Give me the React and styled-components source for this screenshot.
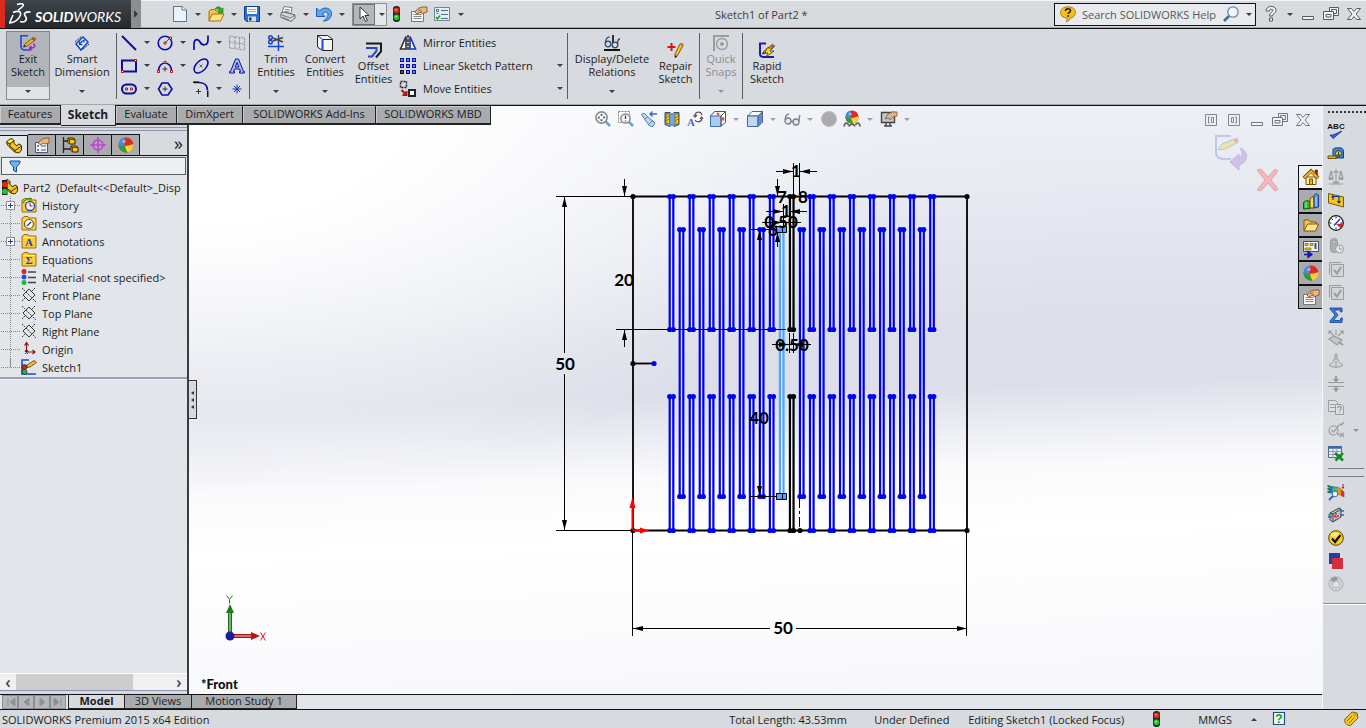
import React from 'react';
import styled, { createGlobalStyle, css } from 'styled-components';

const GlobalStyle = createGlobalStyle`
  * {
    box-sizing: border-box;
  }
  body {
    background: #d7dadf;
    color: #1c1c1c;
    font-family: 'Open Sans', 'Noto Sans', sans-serif;
    font-size: 11px;
    line-height: 13px;
    margin: 0;
  }
  button, input {
    background: none;
    border: 0;
    color: inherit;
    font: inherit;
    margin: 0;
    padding: 0;
  }
  ul {
    list-style: none;
    margin: 0;
    padding: 0;
  }
  svg {
    display: block;
  }
`;

const navy = '#0c0ca8';
const gray = '#9a9ca0';

const folder = (
  <>
    <path d="M1 3h1l1-1.500h4l1 1.500h7v12H1z" fill="#f8cf3c" stroke="#a36c08" />
    <path d="M2.500 4.500h11" stroke="#fff0a0" />
  </>
);

const plane = (
  <g fill="none" stroke="#333">
    <path d="M8 2l6 6-6 6-6-6z" />
    <path d="M5 5l6 6M1 1l3 3M12 12l3 3M14 1l-3 3M1 14l3-3" strokeDasharray="2 1" />
  </g>
);

const pencil = (
  <>
    <path d="M4.500 9.500L12 3.500l2.500 2L7 11l-3.500 1z" fill="#f6b93b" stroke="#5b3a08" strokeWidth=".8" />
    <path d="M12 3.500l1.500-1.200 2.300 1.600-1.300 1.600z" fill="#e06a6a" stroke="#5b1010" strokeWidth=".6" />
    <path d="M3.500 12l1-2.300 1.500 1.600z" fill="#222" />
  </>
);

const part = (
  <>
    <path d="M.5 4L3 1.500l3-1 2 2v3l3 2.500 1.500-2 2 .5 1 2v3.500L13 15l-4.500-1-7-7z" fill="#f2c81c" stroke="#3d2c00" />
    <path d="M1 4.500l3 1.500 4-3.500M4 6v2.500l5 4 3-2 3.500-2.500M9 12.500v1.500" fill="none" stroke="#3d2c00" />
    <path d="M2 3.500l2.500-2 2 1-2.500 2zM10.500 9.500l2-2" fill="#ffeb80" stroke="none" />
  </>
);

const lights = (
  <>
    <rect x="5" y="0" width="7" height="16" rx="3" fill="#2b2b2b" />
    <circle cx="8.500" cy="4.500" r="2.800" fill="#e8261c" />
    <circle cx="8.500" cy="11.300" r="2.800" fill="#21c42a" />
    <circle cx="8" cy="3.700" r=".9" fill="#ff9a90" />
    <circle cx="8" cy="10.500" r=".9" fill="#a4f7a0" />
  </>
);

const sphere = (
  <>
    <circle cx="8" cy="8" r="7.500" fill="#e02a1f" />
    <path d="M.5 8A7.500 7.500 0 0 1 8 .5c-2 2-2.500 5.500-1 8.500-2 .5-4.500.3-6.500-1z" fill="#3f8be8" />
    <path d="M.5 8c2 1.300 4.500 1.500 6.500 1 .8 2 1.500 4.500 2.500 6.300A7.500 7.500 0 0 1 .5 8z" fill="#27a336" />
    <path d="M7 9c3-.3 6-1 8.500-2 .3 4-2 7.500-6 8.300C8.300 13.500 7.500 11 7 9z" fill="#f7d33c" />
    <circle cx="6" cy="4.500" r="1.800" fill="#fff" opacity=".45" />
  </>
);

const checks = (
  <g fill="#d2d4d7" stroke={gray}>
    <path d="M1.500 13.500v-12h12" />
    <path d="M3.500 3.500h12v12h-12z" />
    <path d="M6 9l3 3.500L13 6" fill="none" strokeWidth="2" />
  </g>
);

const hand = (
  <>
    <path d="M.5 5.500h12v10H.5z" fill="#f6f6f6" stroke="#777" />
    <path d="M2.500 8.500h8M2.500 10.500h8M2.500 12.500h8" stroke="#888" />
    <path d="M4 6l3-3.500L11 1h5v5l-4 1.500-3-1L6 8z" fill="#e9b880" stroke="#7b4a1a" strokeWidth=".8" />
    <path d="M7 5l3-1.500M9 6.500l2-1.500" stroke="#7b4a1a" strokeWidth=".8" />
  </>
);

const restore = (
  <g fill="none" stroke="#555960">
    <path d="M6.500 1.500h9v8h-9zM8.500 3.500h5v4h-5z" fill="#f4f5f7" />
    <path d="M.5 5.500h10v8H.5zM3 8.500h5v2.500H3z" fill="#f4f5f7" />
  </g>
);

const cross = (
  <path
    d="M1.500 2.500h4L8 5.500l2.500-3h4L10 8l4.500 5.500h-4L8 10.500l-2.500 3h-4L6 8z"
    fill="#f4f5f7"
    stroke="#555960"
  />
);

const icons = {
  file: (
    <>
      <path d="M1.500.5H10L14.500 4v11.500h-13z" fill="#eaf3fa" stroke="#5b7487" />
      <path d="M10 .5V4h4.500" fill="#fff" stroke="#5b7487" />
    </>
  ),
  open: (
    <>
      <path d="M1 15V5h1l1-1.500h4L8 5h4v2" fill="#f2c64a" stroke="#a5730d" />
      <path d="M1 15L4 8h12l-3.500 7z" fill="#ffe187" stroke="#a5730d" />
      <path d="M7 3c2-3 5-3 6.500 0L15 2v5H10l1.500-2C10.500 3 9 2.500 7 3z" fill="#35ab35" stroke="#187018" strokeWidth=".6" />
    </>
  ),
  save: (
    <>
      <path d="M.5.500h15v15h-13l-2-2z" fill="#2d70d0" stroke="#123c86" />
      <path d="M3 1h10v7H3z" fill="#f6f8fb" />
      <path d="M4 3.500h8M4 5.500h8" stroke="#9ab" />
      <path d="M4 10.500h8v5H4z" fill="#d9dee6" />
      <path d="M5 11.500h2.500v3H5z" fill="#234" />
    </>
  ),
  print: (
    <>
      <path d="M2 7l2-6.500 8 1-1 6z" fill="#fff" stroke="#777" />
      <path d="M5 3.500l5 .6M4.500 5.500l5 .6" stroke="#67a" />
      <path d="M1 7l3-1 11 3v3l-4 3.500L1 11.500z" fill="#d5d7da" stroke="#666" />
      <path d="M1.500 9l9 3 4.500-3M3 11.500l6 2.500" fill="none" stroke="#777" />
    </>
  ),
  undo: (
    <path d="M.5 2v8.500H9L6.500 8c2-3 5.500-2.500 5.500.5 0 2.500-1.500 4-4.500 6.500 5 0 8-3.500 8-7.500C15.500 2.500 8.500-.5 3.500 5z" fill="#5aa9ea" stroke="#1a5fb0" />
  ),
  cursor: <path d="M4 1v12l3-3 2.500 5.500 2-1L9 9.500h4z" fill="#fff" stroke="#333" />,
  lights,
  hand,
  list: (
    <>
      <path d="M.5 1.500h15v13H.5z" fill="#e4eef5" stroke="#6e8798" />
      <path d="M7 4.500h7M7 8.500h7M7 12.500h7" stroke="#4c6c80" />
      <path d="M2.500 3.500h2v2h-2zM2.500 7.500h2" fill="none" stroke="#4c6c80" />
      <path d="M2 11l1.500 2L6 9.500" fill="none" stroke="#1ea02a" strokeWidth="1.600" />
    </>
  ),
  helpBubble: (
    <>
      <path d="M8 .8c5 0 7.500 2.500 7.500 5.500S13 12 10 12.300c0 1.700-1.500 3-4 3 1-1 1.300-2 1-3.200C2.500 11.700.5 9.500.5 6.500S3 .8 8 .8z" fill="#f5bf1c" stroke="#9c6a00" strokeWidth=".8" />
      <path d="M5.500 5c0-3 5-3 5-.3 0 1.800-2.300 1.500-2.300 3.300" fill="none" stroke="#222" strokeWidth="1.600" />
      <circle cx="8.200" cy="10" r="1" fill="#222" />
    </>
  ),
  search: (
    <>
      <path d="M1 15l5-5" stroke="#47708e" strokeWidth="2.600" />
      <circle cx="10" cy="6" r="5.200" fill="#ecf6fc" stroke="#6a8ea8" strokeWidth="1.300" />
      <path d="M7 6c0-2 1.500-3 3-3" fill="none" stroke="#fff" />
    </>
  ),
  question: (
    <g stroke="#555960" fill="#f4f5f7">
      <path d="M3 5c0-6 10-6 10-.5 0 3-3.500 3-3.500 5.500h-3c0-3.500 3.500-4 3.500-5.500S6.500 2.500 6.200 5z" />
      <path d="M6.500 12h3v3h-3z" />
    </g>
  ),
  minimize: <path d="M2.500 10.500h11v3h-11z" fill="#f4f5f7" stroke="#555960" />,
  restore,
  cross,
  paneLeft: (
    <g fill="none" stroke="#686c74">
      <path d="M2.500 2.500h11v11h-11zM10.500 5.500v5h-2v-5zM7 5H5.500v6H7" fill="#f0f1f4" />
    </g>
  ),
  paneRight: (
    <g fill="none" stroke="#686c74">
      <path d="M2.500 2.500h11v11h-11zM5.500 5.500v5h2v-5zM9 5h1.500v6H9" fill="#f0f1f4" />
    </g>
  ),
  exitSketch: (
    <>
      <path d="M8 .8H1V11c0 2.500 1.500 4 4 4h5" fill="none" stroke="#1d46e0" strokeWidth="1.600" />
      {pencil}
      <path d="M13 9c3 1 2 4-1 4h-2M11.500 11l-2 2 2 2.500" fill="none" stroke="#b010b8" strokeWidth="1.300" />
    </>
  ),
  smartDim: (
    <g fill="none" stroke="#1846c8">
      <path d="M2 9l7-7 5 5-7 8z" fill="#e6effc" strokeWidth="1.500" />
      <path d="M1 7l7-6M15 9l-7 6" stroke="#222" strokeDasharray="2 1" />
      <path d="M5 9l5-4M5.500 6.500v3h3M10 4.500v3" strokeWidth="1.300" />
    </g>
  ),
  line: <path d="M1 1l14 14" stroke={navy} strokeWidth="2" />,
  rect: (
    <>
      <path d="M1 2.500h14v11H1z" fill="none" stroke={navy} strokeWidth="2" />
      <path d="M13.500 1.500h2v2h-2zM.5 12.500h2v2h-2z" fill="#fff" stroke="#b01010" />
    </>
  ),
  slot: (
    <>
      <rect x="1" y="3.500" width="14" height="9" rx="4.500" fill="none" stroke={navy} strokeWidth="2" />
      <path d="M4.500 7h2v2h-2zM9.500 7h2v2h-2z" fill="#fff" stroke="#b01010" />
    </>
  ),
  circle: (
    <>
      <circle cx="8" cy="8" r="6.800" fill="none" stroke={navy} strokeWidth="1.600" />
      <path d="M9 7l3-3" stroke="#b01010" />
      <path d="M7 7h2v2H7zM12.500 2h2v2h-2z" fill="#fff" stroke="#b01010" />
    </>
  ),
  arc: (
    <>
      <path d="M1.500 13A6.500 8 0 0 1 14.500 13" fill="none" stroke={navy} strokeWidth="1.600" />
      <path d="M8 8.500v5M5.500 11h5" stroke="#333" />
      <path d="M7 3.500h2v2H7zM.5 12.500h2v2h-2zM13.500 12.500h2v2h-2z" fill="#fff" stroke="#b01010" />
    </>
  ),
  polygon: (
    <>
      <path d="M5 2h6l4 6-4 6H5L1.500 8z" fill="none" stroke={navy} strokeWidth="1.600" />
      <path d="M8 5.500v5M5.500 8h5" stroke="#333" />
    </>
  ),
  spline: <path d="M1 15V9.500c0-6 4-6 6-2.500 2 4 8 4 8-2V.5" fill="none" stroke={navy} strokeWidth="1.700" />,
  ellipse: (
    <>
      <ellipse cx="8" cy="8" rx="8.500" ry="5" fill="none" stroke={navy} strokeWidth="1.600" transform="rotate(-45 8 8)" />
      <path d="M6.500 6.500l3 3M9.500 6.500l-3 3" stroke="#444" strokeWidth=".8" />
    </>
  ),
  fillet: (
    <>
      <path d="M1 1.500h5c6 0 8.500 3.500 8.500 8" fill="none" stroke={navy} strokeWidth="1.700" />
      <path d="M0 .500h6v1.500H0zM14 10h1.500v6H14z" fill="#111" />
      <path d="M5.500 8v5M3 10.500h5" stroke="#333" />
    </>
  ),
  planeGrid: (
    <path d="M.5 1l15 2v12l-15-2zM.5 7l15 2M6 2v12M10.500 2.500v12" fill="none" stroke="#8e9095" strokeDasharray="2 1" />
  ),
  text: (
    <>
      <path d="M6.500 1h3l5 12.500h1V15h-5v-1.500h1L10.500 11h-5l-1 2.500h1V15h-5v-1.500h1z" fill="#a9bbf0" stroke={navy} />
      <path d="M6.300 9h3.500L8 4.500z" fill="#d7dadf" stroke={navy} />
    </>
  ),
  point: <path d="M8 3.500v9M3.500 8h9M5 5l6 6M11 5l-6 6" stroke="#1630c0" />,
  trim: (
    <>
      <path d="M0 11.500h16M10.500 0v16" stroke="#1846c8" strokeWidth="1.500" />
      <path d="M5 6l10-3.500M5 3l10 4" stroke="#444" strokeWidth="1.600" />
      <circle cx="2.500" cy="2.500" r="1.800" fill="none" stroke="#1846c8" strokeWidth="1.500" />
      <circle cx="2.500" cy="7" r="1.800" fill="none" stroke="#1846c8" strokeWidth="1.500" />
    </>
  ),
  convert: (
    <>
      <path d="M.5.500h10l5 3.500v11.500h-10L.5 12z" fill="#f4f5f7" stroke="#222" />
      <path d="M5.500 4.500h10M.5.500l5 4" fill="none" stroke="#222" />
      <path d="M5.500 5v10" stroke="#1846e8" strokeWidth="2" />
    </>
  ),
  offset: (
    <g fill="none">
      <path d="M0 1.500h15v8L10 15.500" stroke="#1a1a1a" strokeWidth="2" />
      <path d="M0 6h10.500v3L6 14.500H2" stroke="#2348c0" strokeWidth="2" />
    </g>
  ),
  mirror: (
    <>
      <path d="M8 0v16" stroke="#222" strokeDasharray="3 1" strokeWidth="1.500" />
      <path d="M6 1.500L.5 14H6z" fill="#fff" stroke="#333" strokeWidth="1.600" />
      <path d="M10 1.500L15.500 14H10z" fill="#fff" stroke="#1630c0" strokeWidth="1.600" />
    </>
  ),
  pattern: (
    <>
      {[0, 6, 12].map(x =>
        [0, 6, 12].map(y => (
          <rect
            key={`${x}-${y}`}
            x={x + 0.5}
            y={y + 0.5}
            width="3"
            height="3"
            fill={x === 0 && y === 12 ? '#555' : '#6f86e8'}
            stroke={x === 0 && y === 12 ? '#111' : navy}
          />
        ))
      )}
    </>
  ),
  move: (
    <>
      <path d="M.5 .5h6v6h-6z" fill="none" stroke="#222" strokeDasharray="2 1" strokeWidth="1.500" />
      <path d="M1.500 9l4 4M6.500 10v4h-4" fill="none" stroke="#b01010" strokeWidth="2" />
      <path d="M9 9h6v6H9z" fill="#fff" stroke="#222" strokeWidth="2" />
    </>
  ),
  relations: (
    <>
      <path d="M9 0v12" stroke="#222" strokeWidth="1.800" />
      <path d="M0 15h16" stroke="#111" strokeWidth="2" />
      <circle cx="4" cy="9" r="2.800" fill="#c9e2f4" stroke="#34495c" strokeWidth="1.300" />
      <circle cx="11" cy="10" r="2.800" fill="#c9e2f4" stroke="#34495c" strokeWidth="1.300" />
      <path d="M1.500 8c0-4 2-6 4-6M13.500 9c0-3 1-5 2.500-5" fill="none" stroke="#34495c" strokeWidth="1.300" />
    </>
  ),
  repair: (
    <>
      <path d="M3.500 1v8M-.5 5h8" stroke="#d01818" strokeWidth="2" />
      <path d="M12 2l3 1.500-5.500 10L7 15.500 7 12z" fill="#f7c32c" stroke="#5b3a08" strokeWidth=".8" />
      <path d="M12 2l1.200-1.500 2.600 1.300L15 3.500z" fill="#e06a6a" />
      <path d="M7 13.500v2.500l2.300-2z" fill="#111" />
    </>
  ),
  snaps: (
    <g fill="none" stroke={gray}>
      <path d="M0 1h16M1 0v16" strokeWidth="2" />
      <circle cx="9" cy="9" r="5.500" strokeWidth="1.400" />
      <circle cx="9" cy="9" r="1.500" fill={gray} />
    </g>
  ),
  rapid: (
    <>
      <path d="M7 1.500H1V12c0 2 1.500 3 4 3h10" fill="none" stroke="#1818c8" strokeWidth="2" />
      {pencil}
      <path d="M8 6h5l-2 3h4l-8 6 2-4H6z" fill="#ffd91a" stroke="#222" strokeWidth=".7" />
    </>
  ),
  part,
  root: (
    <>
      {part}
      <path d="M0 1h5.500v15H0z" fill="#222" />
      <circle cx="2.800" cy="5.500" r="2.700" fill="#e8261c" />
      <circle cx="2.800" cy="12.500" r="2.700" fill="#21c42a" />
    </>
  ),
  property: (
    <>
      <path d="M1.500 5.500h12v10h-12z" fill="#eef3fa" stroke="#556" />
      <path d="M3 8h2v2H3zM3 12h2v2H3z" fill="#6488c8" />
      <path d="M7 9h5M7 13h5" stroke="#556" />
      <path d="M4 6l3-3 4-2h4v5l-4 1-2-1-2 2z" fill="#e9b880" stroke="#7b4a1a" strokeWidth=".8" />
    </>
  ),
  config: (
    <>
      <path d="M1.500 0v16M2 4h4M2 12h7" stroke="#222" strokeWidth="1.300" />
      <path d="M6 1h5l2 1.500V7H7.500L6 5.500zM9 9h5l2 1.500V15h-5.500L9 13.500z" fill="#f2c81c" stroke="#2a1e00" />
      <path d="M6 1l1.500 1.500H13M7.500 2.500V7M9 9l1.500 1.500H16M10.500 10.500V15" fill="none" stroke="#2a1e00" strokeWidth=".7" />
    </>
  ),
  target: (
    <g fill="none" stroke="#c23fd6">
      <circle cx="8" cy="8" r="5" strokeWidth="1.500" />
      <path d="M8 0v16M0 8h16" strokeWidth="1.500" />
    </g>
  ),
  sphere,
  funnel: <path d="M3 3h10v2L9.500 9v5L6.500 12.500V9L3 5z" fill="#6db2f2" stroke="#0f4fa8" />,
  history: (
    <>
      {folder}
      <circle cx="9" cy="9" r="4.500" fill="#eef5ff" stroke="#284a9a" strokeWidth="1.300" />
      <path d="M9 6v3h2.500" fill="none" stroke="#b01010" />
      <path d="M2 6c2-4 6-5 9-4" fill="none" stroke="#1f9a2a" strokeWidth="1.500" />
    </>
  ),
  sensors: (
    <>
      {folder}
      <circle cx="8" cy="9" r="4.500" fill="#fff" stroke="#555" strokeWidth="1.200" />
      <path d="M6 11l4-4" stroke="#345" strokeWidth="1.400" />
    </>
  ),
  annotations: (
    <>
      {folder}
      <text x="8" y="13" textAnchor="middle" fontFamily="Liberation Serif, serif" fontSize="11" fontWeight="700" fill="#1c3fc0">A</text>
    </>
  ),
  equations: (
    <>
      {folder}
      <text x="8" y="13" textAnchor="middle" fontFamily="Liberation Serif, serif" fontSize="11" fontWeight="700" fill="#1c3fc0">Σ</text>
    </>
  ),
  material: (
    <>
      <circle cx="3" cy="2.500" r="2.500" fill="#e02020" />
      <circle cx="3" cy="8" r="2.500" fill="#2b49d8" />
      <circle cx="3" cy="13.500" r="2.500" fill="#25b535" />
      <path d="M7 3h8M7 8.500h8M7 13.500h8" stroke="#444" strokeWidth="1.600" />
    </>
  ),
  plane,
  origin: (
    <g stroke="#8e1414" fill="none" strokeWidth="1.200">
      <path d="M5.500 11V2M3.500 4.500l2-3 2 3M6 11h8M11.500 9l2.500 2-2.500 2" />
      <path d="M4 9.500l3 3M7 9.500l-3 3" stroke="#222" />
    </g>
  ),
  sketch: (
    <>
      <path d="M8 1H1v14h14" fill="none" stroke="#1d46e0" strokeWidth="1.600" />
      <path d="M6 6l7-4.500 2.500 2L9 8l-3 .5z" fill="#f6b93b" stroke="#5b3a08" strokeWidth=".8" />
      <circle cx="3.500" cy="8" r="2.500" fill="#d62018" stroke="#222" strokeWidth=".7" />
      <circle cx="3.500" cy="13" r="2.500" fill="#21c42a" stroke="#222" strokeWidth=".7" />
    </>
  ),
  zoomFit: (
    <>
      <path d="M10.500 10.500l4.500 4.500" stroke="#6f9fd8" strokeWidth="2.600" />
      <circle cx="6.500" cy="6.500" r="5.600" fill="#f4f6f8" stroke="#888c92" strokeWidth="1.600" />
      <path d="M6.500 2.500l1.500 2H5zM6.500 10.500l1.500-2H5zM2.500 6.500l2-1.500v3zM10.500 6.500l-2-1.500v3z" fill="#444" />
    </>
  ),
  zoomArea: (
    <>
      <path d="M.5.500h11v11H.5z" fill="none" stroke="#888" strokeDasharray="2 1" />
      <path d="M10.500 10.500l4.500 4.500" stroke="#6f9fd8" strokeWidth="2.600" />
      <circle cx="7.500" cy="7.500" r="4.600" fill="#f4f6f8" stroke="#888c92" strokeWidth="1.500" />
      <path d="M7.500 4.500V8M7.500 9.500v1" stroke="#444" strokeWidth="1.300" />
    </>
  ),
  prevView: (
    <>
      <path d="M.5 3.500L3 2l4 4 7 6-2 3.500-3.500-.5-5-7z" fill="#b9d6f3" stroke="#4f80b8" />
      <path d="M4 8l3-2.500M8 13l4-4" stroke="#4f80b8" />
      <path d="M16 3H9M11.500 .5L9 3l2.500 2.500" fill="none" stroke="#2f68c8" strokeWidth="1.400" />
    </>
  ),
  section: (
    <>
      <path d="M1 1.500h5c1 2 3 2 4 0h5v12l-5 2c-1-2-3-2-4 0l-5-2z" fill="#6fa8e8" stroke="#294f86" />
      <path d="M2 3h3.500v10L2 12zM11 3h3.500v9L11 14z" fill="#f5cc2d" stroke="#7d5d00" strokeWidth=".8" />
      <path d="M2 7l3-2M2 10l3-2M11 7l3-2M11 10l3-2" stroke="#7d5d00" strokeWidth=".8" />
    </>
  ),
  orientText: (
    <>
      <text x="0" y="15" fontFamily="Liberation Serif, serif" fontSize="11" fontWeight="700" fill="#3a6fd8">A</text>
      <path d="M8 5c0-5 6-5 7-1M15 7c0 4-5 5-7 2M6.500 4l1.500 2 2-2M16 8l-1.500-2-1.500 2" fill="none" stroke="#555" strokeWidth="1.200" />
    </>
  ),
  orientation: (
    <>
      <path d="M4.500.500h11v11L11 15" fill="#fff" stroke="#555" />
      <path d="M.5 5h10.500v10.500H.5z" fill="#a9cdf2" stroke="#3f6ea8" />
      <path d="M.5 5l4-4.500M11 5l4.500-4.500M11 5v10" stroke="#555" fill="none" />
      <path d="M8 1.500v3M6.500 3h3M13 6v4M11.500 8h3" stroke="#d02020" />
    </>
  ),
  style: (
    <>
      <path d="M.5 5l4.500-4.500h10.500L11 5z" fill="#fafcff" stroke="#4d6484" />
      <path d="M.5 5H11v10.500H.5z" fill="#bcd8f6" stroke="#4d6484" />
      <path d="M11 5l4.500-4.500V11L11 15.500z" fill="#5c8fd4" stroke="#4d6484" />
    </>
  ),
  glasses: (
    <g fill="none" stroke="#7c8086" strokeWidth="1.300">
      <circle cx="4" cy="10" r="3" fill="#dcebf6" />
      <circle cx="12" cy="11" r="3" fill="#dcebf6" />
      <path d="M7 10.500h2M1.200 9C1 5 3 3 5 3M15 10c.5-3 0-4 1-6" />
    </g>
  ),
  ball: <circle cx="8" cy="8" r="7.500" fill="#ababad" stroke="#b9babc" />,
  scene: (
    <>
      <g transform="translate(1 -1) scale(.88)">{sphere}</g>
      <path d="M0 15.500c1-5 4-4 4.500-1M5 15.500c1-3 5-3 6 0M11.500 14c1-3 4-3 4.500 1.500" fill="none" stroke="#555" strokeWidth="1.500" />
    </>
  ),
  screen: (
    <>
      <path d="M.5 1.500h13v10H.5z" fill="#c5c8cc" stroke="#444" strokeWidth="1.400" />
      <path d="M5 12v2.500M9 12v2.500M3 15h8" stroke="#444" strokeWidth="1.400" />
      <path d="M4 8l3-5 4-2h5v4l-4 1-3 3-1-2z" fill="#e3b489" stroke="#7b5535" strokeWidth=".8" />
    </>
  ),
  home: (
    <>
      <path d="M12 1h2.500v6H12z" fill="#c41f1f" stroke="#6a0a0a" strokeWidth=".6" />
      <path d="M3 8h10v7.500H3z" fill="#fff1b0" stroke="#7a5200" />
      <path d="M.8 9L8 1.800 15.200 9" fill="none" stroke="#7a5200" strokeWidth="3.400" />
      <path d="M1.300 8.700L8 2.200l6.700 6.500" fill="none" stroke="#f7bd1d" strokeWidth="1.800" />
      <path d="M6.500 10h3v5.500h-3z" fill="#f0b01a" stroke="#7a5200" />
    </>
  ),
  library: (
    <>
      <path d="M.5 9.500l3-2 3.500 1v7l-6.500.5z" fill="#2fb93a" stroke="#0c5a14" />
      <path d="M7 6l2-2.500 2 1V15H7z" fill="#f2c81c" stroke="#6a5000" />
      <path d="M11 2.500l2-2 2.500 1.500v12L11 15z" fill="#5b95ea" stroke="#1a3f86" />
      <path d="M3 9v6M9 6v8M13 4v9" stroke="#fff" opacity=".6" />
    </>
  ),
  folderOpen: (
    <>
      <path d="M1 14V3h5l1.500 2H13v3" fill="#f5c94e" stroke="#7d5606" />
      <path d="M1 14l3.500-7H15.500L12.500 14z" fill="#ffe48f" stroke="#7d5606" />
    </>
  ),
  palette: (
    <>
      <path d="M.5 .5h15v10H.5z" fill="#eef1f5" stroke="#40546c" />
      <path d="M2 2.500h3v2H2zM7 2.500h3v2H7zM2 7h6v2H2z" fill="#f2c81c" stroke="#7c6000" strokeWidth=".7" />
      <path d="M12.500 2v6" stroke="#40546c" strokeWidth="2" />
      <path d="M1 13.500h5M5 10.500l4 3-4 3z" fill="#1414c8" stroke="#1414c8" strokeWidth="1.300" />
    </>
  ),
  abc: (
    <>
      <text x="8" y="6" textAnchor="middle" fontFamily="Liberation Sans, sans-serif" fontSize="8" fontWeight="700" fill="#111">ABC</text>
      <path d="M2 12l3 3.500L14 8l-9 4z" fill="#2f6be0" stroke="#1a45a8" />
    </>
  ),
  tape: (
    <>
      <path d="M5 4c0-2 3-2.500 8-2 2 .5 2.500 2 2.500 5v5H5z" fill="#3c8ad8" stroke="#123a78" />
      <circle cx="10.500" cy="7.500" r="3" fill="#f2d22c" stroke="#333" />
      <path d="M10.500 5.500v4M9 9h3" stroke="#333" />
      <path d="M0 10h8v2.500H0z" fill="#e8c21a" stroke="#6a5000" />
    </>
  ),
  scales: (
    <g fill="none" stroke={gray} strokeWidth="1.200">
      <path d="M8 0v13M2 3h12M1 15h14M3 3L1 9h4zM13 3l-2 6h4z" />
      <path d="M1 10h4M11 10h4M5 13.500h6" strokeWidth="2" />
    </g>
  ),
  massPlane: (
    <>
      <path d="M.5 1.500l15 3.500v10L.5 11z" fill="#f5c623" stroke="#7a5800" />
      <path d="M5 8V4.500h6V10M3.500 5.500l1.500-2 1.500 2M9.500 9l1.500 2 1.500-2" fill="none" stroke="#1838a8" strokeWidth="1.200" />
    </>
  ),
  gauge: (
    <>
      <circle cx="8" cy="8" r="7.300" fill="#fff" stroke="#222" strokeWidth="1.300" />
      <path d="M8 9l7-.5-2 5z" fill="#e02020" />
      <path d="M8 1.500v2M1.500 8h2M14.500 8h-2M8 14.500v-2M3.500 3.500l1.500 1.500" stroke="#222" />
      <path d="M6 10.500L12 4" stroke="#1c4ed0" strokeWidth="1.600" />
    </>
  ),
  lightClock: (
    <g stroke={gray} fill="#aeb0b3">
      <rect x="2.500" y=".5" width="7" height="14" rx="3" />
      <circle cx="6" cy="4" r="2" fill="#c4c6c8" />
      <circle cx="11.500" cy="11" r="4" fill="#e4e5e7" />
      <path d="M11.500 8.500V11H14" fill="none" />
    </g>
  ),
  checks,
  sigma: <path d="M2 1h12v4h-1.500L12 3H6l4 5-4.500 5.500H12l1-2.500h1.500L14 15.500H2V14l5-6-5-6z" fill="#3a7be0" stroke="#123f98" strokeWidth=".8" />,
  deviation: (
    <g stroke={gray} fill="none" strokeWidth="1.200">
      <path d="M1 1l5 5M1 4V1h3M15 1l-5 5M15 4V1h-3M8 0v5" />
      <path d="M1 9l5-3 8 4-5 5z" fill="#c4c6c9" />
      <path d="M11 12l4 3" strokeWidth="2" />
    </g>
  ),
  draft: (
    <g stroke={gray} fill="#d0d2d5">
      <path d="M7 2h2c0 5 2 8 6 10-2 3-12 3-14 0C5 10 7 7 7 2z" />
      <path d="M8 0v16" fill="none" strokeDasharray="3 1" />
    </g>
  ),
  thickness: (
    <g stroke={gray} fill={gray}>
      <path d="M0 6.500h16M0 10.500h16" />
      <path d="M8 0v4M8 16v-3" strokeWidth="2" />
      <path d="M5.500 3.500h5L8 6zM5.500 13.500h5L8 11z" />
    </g>
  ),
  compare: (
    <g stroke={gray} fill="#dfe0e2">
      <path d="M.5 1.500h7l2 2v9h-9z" />
      <path d="M2 5.500h5M2 8.500h5" />
      <path d="M7.500 5.500h6l2 2v8h-8z" />
      <path d="M9.500 9c0-2 4-2 4 0 0 1.500-2 1.500-2 3M11.500 13v1" fill="none" strokeWidth="1.300" />
    </g>
  ),
  checkEntity: (
    <g stroke={gray} fill="none" strokeWidth="1.200">
      <circle cx="5.500" cy="8.500" r="4.500" />
      <path d="M3.500 8l2 2 4-5M9 5l3-2.500M12 1.500l1.500 1.500L16 0M9 11.500l3 2M12 11l4 4M16 11l-4 4" />
    </g>
  ),
  excel: (
    <>
      <path d="M.5 1.500h13v11H.5z" fill="#f4f7fa" stroke="#4a6688" />
      <path d="M.5 2.500h13" stroke="#3a69b0" strokeWidth="2.500" />
      <path d="M.5 6.500h13M.5 9.500h13M5 4v9M9 4v9" stroke="#7f96b0" />
      <path d="M7 8l8 7.500M15 8l-7.500 7.500" stroke="#178a22" strokeWidth="2.600" />
    </>
  ),
  simulation: (
    <>
      <path d="M1 2l6 1c4 0 6 2 9 5v5c-5-3-8-4-15-4z" fill="#3cc45c" stroke="#30507a" strokeWidth=".6" />
      <path d="M1 2l4 .7L4 9H1z" fill="#2a68d8" />
      <path d="M9 3.500c3 .5 5 2.500 7 4.500v5l-6-3z" fill="#f08a1c" />
      <path d="M13 6l3 2v5l-3-1.500z" fill="#e02c1c" />
      <path d="M15 0v4M14 3l1 1.500L16 3" stroke="#c01010" fill="none" />
      <path d="M.5 1v8" stroke="#178a22" strokeDasharray="2 1" strokeWidth="2" />
      <circle cx="7" cy="10" r="2.800" fill="#eef6fb" stroke="#47708e" />
      <path d="M5 12l-4 4" stroke="#2a68c8" strokeWidth="2" />
    </>
  ),
  floXpress: (
    <g fill="none" stroke="#444">
      <path d="M2 6l9-5 2 1v8l-8 5-3-2z" fill="#c2c5c8" />
      <path d="M2 6l3 1v8M5 7l8-5" />
      <path d="M8 6v7M6 9h6" stroke="#d82020" strokeDasharray="2 1" strokeWidth="1.300" />
      <path d="M12 4h4M12 8h4M0 10h4" stroke="#2868d0" strokeWidth="1.300" />
      <path d="M0 8h6M9 4h5" stroke="#209a30" strokeDasharray="2 1" />
    </g>
  ),
  dfm: (
    <>
      <circle cx="8" cy="8" r="7.300" fill="#f8cd28" stroke="#5a4200" />
      <ellipse cx="7" cy="4.500" rx="4" ry="2" fill="#fff0a0" opacity=".8" />
      <path d="M4 8.500l3 3.500 5.500-7" fill="none" stroke="#111" strokeWidth="2.200" />
    </>
  ),
  squares: (
    <>
      <path d="M1 0h11v11H1z" fill="#2340a0" />
      <path d="M4 5h11v11H4z" fill="#d0303c" />
    </>
  ),
  ring: (
    <g stroke="#b0b2b5">
      <circle cx="8" cy="8" r="7" fill="#cfd1d4" />
      <circle cx="8" cy="8.500" r="3.500" fill="#e3e5e8" />
      <path d="M2 4c2-4 7-4 8-1L6 6z" fill="#94969a" />
    </g>
  ),
  helpBox: (
    <>
      <path d="M2.500 1.500h11v12h-11z" fill="#eafaf0" stroke="#234f86" strokeWidth="1.200" />
      <text x="8" y="12" textAnchor="middle" fontFamily="Liberation Sans, sans-serif" fontSize="12" fontWeight="700" fill="#149a28">?</text>
    </>
  ),
  tag: (
    <>
      <path d="M9 1l5 1 1 5-7 7c-2 2-8-2-6-6z" fill="#f8c61c" stroke="#8a5f00" />
      <path d="M4 10l5-5M6 12l5-5" stroke="#8a5f00" />
      <circle cx="12" cy="4" r="1.200" fill="#fff" stroke="#8a5f00" strokeWidth=".7" />
    </>
  ),
};

const IconSvg = styled.svg`
  flex: none;
  height: 16px;
  overflow: visible;
  width: 16px;
`;

const Icon = ({ name }) => (
  <IconSvg viewBox="0 0 16 16" aria-hidden="true">
    {icons[name]}
  </IconSvg>
);

const Arrow = styled.button`
  display: block;
  flex: none;
  height: 12px;
  opacity: ${p => (p.$dim ? 0.45 : 1)};
  width: 7px;
  &::before {
    border: 3px solid transparent;
    border-bottom: 0;
    border-top-color: #3a3d42;
    content: '';
    display: block;
    margin: 0 auto;
    width: 0;
    ${p => p.$up && css`transform: rotate(180deg);`}
  }
`;

const IconButton = styled.button`
  align-items: center;
  display: flex;
  flex: none;
  height: 16px;
  justify-content: center;
  width: 16px;
`;

const Tool = ({ name, label }) => (
  <IconButton aria-label={label || name}>
    <Icon name={name} />
  </IconButton>
);

const Window = styled.div`
  display: flex;
  flex-direction: column;
  min-height: 100vh;
`;

/* title bar */

const TitleBar = styled.header`
  align-items: center;
  background: #d7dadf;
  border-bottom: 1px solid #111;
  box-shadow: inset 0 1px #f4f5f6, inset 0 -1px #a3a6aa;
  display: flex;
  height: 29px;
`;

const Logo = styled.div`
  align-items: center;
  align-self: stretch;
  background: linear-gradient(#3f474c, #23292d);
  border-left: 5px solid #dc2a1c;
  color: #fff;
  display: flex;
  gap: 4px;
  padding-left: 4px;
  width: 131px;
`;

const LogoText = styled.span`
  font-family: 'Lato', sans-serif;
  font-size: 14px;
  font-style: italic;
  line-height: 20px;
  padding-top: 5px;
  b {
    font-weight: 700;
  }
`;

const LogoArrow = styled.button`
  align-self: stretch;
  background: #8b8d90;
  flex: none;
  width: 10px;
  &::before {
    border: 4px solid transparent;
    border-left-color: #3a3a3a;
    border-right: 0;
    content: '';
    display: block;
    margin-left: 3px;
    width: 0;
  }
`;

const QuickBar = styled.div`
  align-items: center;
  display: flex;
  flex: 1;
  padding-left: 31px;
`;

const Split = styled.div`
  align-items: center;
  display: flex;
  gap: ${p => p.$gap || 6}px;
  ${Arrow} {
    height: 3px;
  }
`;

const QuickSplit = styled(Split)`
  width: 36px;
`;

const SelectSplit = styled(Split)`
  background: #e6e8eb;
  border: 1px solid #8b8e93;
  gap: 3px;
  height: 23px;
  margin-right: 1px;
  width: 35px;
`;

const Pressed = styled.button`
  align-items: center;
  align-self: stretch;
  background: #b4b6ba;
  border: 1px solid #6e7176;
  display: flex;
  justify-content: center;
  width: 22px;
`;

const QuickTail = styled.div`
  align-items: center;
  display: flex;
  gap: 7px;
`;

const DocTitle = styled.h1`
  color: #3c3e42;
  font-size: 11px;
  font-weight: 400;
  margin: 0;
  white-space: nowrap;
  width: 104px;
`;

const TitleEnd = styled.div`
  align-items: center;
  display: flex;
  flex: 1;
  gap: 7px;
  justify-content: flex-end;
  padding-right: 4px;
`;

const SearchBox = styled.div`
  align-items: center;
  background: #e8eaed;
  border: 1px solid #111;
  display: flex;
  gap: 6px;
  height: 23px;
  padding: 0 3px 0 5px;
  width: 202px;
  input {
    flex: 1;
    min-width: 0;
    outline: 0;
  }
  input::placeholder {
    color: #55585d;
    opacity: 1;
  }
  ${Arrow} {
    height: 3px;
  }
`;

/* ribbon */

const Ribbon = styled.div`
  background: #d7dadf;
  border-bottom: 1px solid #111;
  box-shadow: inset 0 -1px #a3a6aa;
  display: flex;
  height: 77px;
  padding: 2px 6px 0;
`;

const Divider = styled.div`
  background: #5a5d61;
  height: 66px;
  margin: 2px ${p => p.$right}px 0 ${p => p.$left}px;
  width: 1px;
`;

const Command = styled.div`
  align-items: center;
  color: ${p => (p.$disabled ? '#8b8d91' : '#1c1c1c')};
  display: flex;
  flex-direction: column;
  height: 69px;
  width: ${p => p.$width}px;
  ${p =>
    p.$active &&
    css`
      background: linear-gradient(#b1b4b9 55px, #e1e3e6 55px);
      border: 1px solid #85888d;
    `}
`;

const CommandButton = styled.button`
  align-items: center;
  display: flex;
  flex: none;
  flex-direction: column;
  gap: 1px;
  height: ${p => (p.$active ? 58 : 59)}px;
  justify-content: flex-start;
  padding-top: ${p => (p.$low ? 11 : p.$active ? 3 : 4)}px;
  text-align: center;
  white-space: pre-line;
`;

const CommandArrow = styled(Arrow)`
  height: 3px;
`;

const BigCommand = ({ icon, text, width, low, active, disabled, menu }) => (
  <Command $width={width} $active={active} $disabled={disabled}>
    <CommandButton $low={low} $active={active} disabled={disabled}>
      <Icon name={icon} />
      <span>{text}</span>
    </CommandButton>
    {menu && <CommandArrow aria-label="More" $dim={disabled} />}
  </Command>
);

const SketchGrid = styled.div`
  display: grid;
  grid-template-columns: 36px 36px 36px 16px;
  grid-template-rows: repeat(3, 23px);
`;

const EntityList = styled.div`
  display: flex;
  flex-direction: column;
  margin-left: 2px;
  width: 163px;
`;

const EntityRow = styled.div`
  align-items: center;
  display: flex;
  height: 23px;
  justify-content: space-between;
  ${Arrow} {
    height: 3px;
  }
`;

const EntityButton = styled.button`
  align-items: center;
  display: flex;
  gap: 7px;
  white-space: nowrap;
`;

/* workspace */

const Body = styled.div`
  display: flex;
  flex: 1;
`;

const Center = styled.div`
  display: flex;
  flex: 1;
  flex-direction: column;
  min-width: 0;
`;

const Work = styled.div`
  display: flex;
  flex: 1;
`;

const Side = styled.aside`
  background: #d7dadf;
  border-right: 2px solid #3a3d42;
  display: flex;
  flex: none;
  flex-direction: column;
  position: relative;
  width: 189px;
  z-index: 1;
`;

const CommandTabs = styled.nav`
  align-items: flex-start;
  display: flex;
  height: 21px;
`;

const CommandTab = styled.button`
  background: ${p => (p.$active ? '#d7dadf' : '#a9abaf')};
  border: solid #222;
  border-width: 0 1px ${p => (p.$active ? 1 : 2)}px 0;
  box-shadow: ${p => (p.$active ? 'none' : 'inset 1px 1px #c9cbce')};
  flex: none;
  font-size: ${p => (p.$active ? 12 : 11)}px;
  font-weight: ${p => (p.$active ? 700 : 400)};
  height: ${p => (p.$active ? 21 : 19)}px;
  margin-top: ${p => (p.$active ? -1 : 0)}px;
  padding-bottom: 2px;
  width: ${p => p.$width}px;
`;

const PanelTabs = styled.div`
  align-items: flex-end;
  border-bottom: 1px solid #111;
  border-top: 1px solid #8c93ac;
  box-shadow: inset 0 2px #d7dadf, inset 0 3px #8c93ac;
  display: flex;
  height: 29px;
`;

const PanelTab = styled.button`
  align-items: center;
  background: ${p => (p.$active ? '#e2e5ea' : '#a9abaf')};
  border: 1px solid #111;
  border-bottom: 0;
  border-left: 0;
  display: flex;
  flex: none;
  height: 21px;
  justify-content: center;
  margin-bottom: ${p => (p.$active ? -1 : 0)}px;
  width: 28px;
`;

const MoreTabs = styled.button`
  color: #222;
  font-size: 18px;
  height: 24px;
  line-height: 16px;
  margin-left: auto;
  padding-right: 4px;
`;

const FilterBox = styled.div`
  align-items: center;
  background: #eeeff0;
  border: 1px solid #5a5d61;
  display: flex;
  height: 18px;
  margin: 1px 1px 0;
  padding-left: 5px;
  input {
    flex: 1;
    min-width: 0;
    outline: 0;
  }
`;

const TreePane = styled.div`
  background: #e2e5ea;
  border-bottom: 2px solid #9a9fc0;
  height: 204px;
  overflow: hidden;
  padding-top: 3px;
`;

const TreeRoot = styled.div`
  align-items: center;
  display: flex;
  gap: 5px;
  height: 18px;
  padding-left: 2px;
  white-space: pre;
`;

const TreeRow = styled.li`
  align-items: center;
  background: linear-gradient(90deg, #888 50%, transparent 50%) 11px 9px / 2px 1px repeat-x,
    linear-gradient(#888 50%, transparent 50%) 10px 0 / 1px 2px repeat-y;
  display: flex;
  height: 18px;
  &:last-child {
    background: linear-gradient(90deg, #888 50%, transparent 50%) 11px 9px / 2px 1px repeat-x,
      linear-gradient(#888, #888) 10px -9px / 1px 18px no-repeat;
  }
`;

const Expander = styled.button`
  background: linear-gradient(#24408e, #24408e) center / 5px 1px no-repeat,
    linear-gradient(#24408e, #24408e) center / 1px 5px no-repeat, #fafafa;
  border: 1px solid #8d9099;
  height: 9px;
  margin-left: 6px;
  visibility: ${p => (p.$shown ? 'visible' : 'hidden')};
  width: 9px;
`;

const TreeLabel = styled.span`
  align-items: center;
  background: #e2e5ea;
  display: flex;
  flex: 1;
  gap: 5px;
  margin-left: 6px;
  white-space: nowrap;
`;

const Empty = styled.div`
  background: #e2e5ea;
  border-top: 1px solid #f2f3f5;
  flex: 1;
`;

const Scroll = styled.div`
  align-items: center;
  background: #f0f0f0;
  border-bottom: 1px solid #8c93ac;
  border-top: 1px solid #fff;
  display: flex;
  height: 18px;
  margin-bottom: 3px;
`;

const ScrollEnd = styled.button`
  color: #444;
  font-size: 16px;
  font-weight: 600;
  height: 16px;
  line-height: 12px;
  width: 16px;
`;

const Thumb = styled.div`
  background: #cdcdcd;
  height: 16px;
  margin-right: auto;
  width: 117px;
`;

/* the handle hangs over the edge of the drawing area */
const Handle = styled.button`
  background: #d7dadf;
  border: 1px solid #333;
  border-left: 0;
  display: flex;
  flex-direction: column;
  gap: 3px;
  height: 39px;
  justify-content: center;
  left: calc(100% + 2px);
  padding-left: 2px;
  position: absolute;
  top: 274px;
  width: 8px;
  i {
    border: 2px solid transparent;
    border-left: 0;
    border-right: 3px solid #333;
    height: 4px;
    width: 3px;
  }
`;

const Viewport = styled.main`
  background: radial-gradient(ellipse 62% 66% at 0 0, #fff 30%, rgba(255, 255, 255, 0) 100%),
    linear-gradient(178deg, #f0f2f7 0%, #e6e9f1 20%, #dcdfe9 40%, #dcdfe9 49%, #eceef4 56%, #fafafc 62%, #fff 72%, #f6f7fa 100%);
  flex: 1;
  min-width: 0;
  position: relative;
`;

const Drawing = styled.svg`
  height: 100%;
  left: 0;
  position: absolute;
  top: 0;
  width: 100%;
  text {
    font-family: 'Lato', sans-serif;
    font-size: 17px;
    font-weight: 700;
    text-anchor: middle;
  }
`;

const ViewTools = styled.div`
  align-items: center;
  display: flex;
  gap: 7px;
  justify-content: center;
  padding: 5px 6px 0 0;
  position: relative;
  ${Arrow} {
    height: 3px;
  }
`;

const ViewWindow = styled.div`
  display: flex;
  gap: 7px;
  opacity: 0.8;
  position: absolute;
  right: 11px;
  top: 6px;
`;

const Corner = styled.svg`
  height: 60px;
  position: absolute;
  right: 43px;
  top: 26px;
  width: 66px;
`;

const TaskTabs = styled.div`
  display: flex;
  flex-direction: column;
  position: absolute;
  right: 0;
  top: 59px;
`;

const TaskTab = styled.button`
  align-items: center;
  background: ${p => (p.$active ? '#eef0f3' : '#a9abaf')};
  border: solid #111;
  border-width: 1px 0 1px 1px;
  display: flex;
  height: 24px;
  justify-content: center;
  width: 24px;
`;

const Triad = styled.svg`
  bottom: 48px;
  height: 52px;
  left: 30px;
  position: absolute;
  width: 52px;
`;

const ViewName = styled.div`
  bottom: 3px;
  color: #111;
  font-family: 'Lato', sans-serif;
  font-size: 13px;
  font-weight: 900;
  left: 12px;
  position: absolute;
`;

const RightBar = styled.aside`
  align-items: flex-start;
  background: #d7dadf;
  border-left: 1px solid #f6f7f8;
  display: flex;
  flex: none;
  flex-direction: column;
  gap: 7px;
  padding: 5px 0 0 5px;
  width: 44px;
  ${Arrow} {
    height: 3px;
  }
`;

const Grip = styled.div`
  border-top: 2px dotted #333;
  margin-bottom: 3px;
  width: 38px;
`;

const BarRule = styled.div`
  border-bottom: 1px solid #7a7d82;
  border-top: 1px solid #7a7d82;
  height: 9px;
  width: 36px;
`;

const BarEnd = styled.div`
  border-top: 1px solid #8c8f94;
  box-shadow: inset 0 1px #fff;
  height: 2px;
  margin: 4px 0 0 -5px;
  width: 44px;
`;

/* bottom */

const SheetTabs = styled.div`
  background: #e2e5ea;
  border-top: 1px solid #111;
  display: flex;
  height: 15px;
  padding-left: 2px;
`;

const SheetNav = styled.button`
  align-items: center;
  background: #b5b7bb;
  border: 1px solid #8b8e93;
  display: flex;
  justify-content: center;
  width: 16px;
`;

const SheetTab = styled.button`
  background: ${p => (p.$active ? '#d7dadf' : '#a9abaf')};
  border: solid #222;
  border-width: 0 1px 1px ${p => (p.$active ? 1 : 0)}px;
  font-weight: ${p => (p.$active ? 700 : 400)};
  line-height: 12px;
  margin-left: ${p => (p.$active ? 2 : 0)}px;
  padding-bottom: 1px;
  width: ${p => p.$width}px;
`;

const StatusBar = styled.footer`
  align-items: center;
  background: #d7dadf;
  border-top: 1px solid #111;
  display: flex;
  height: 19px;
  padding: 0 7px 0 2px;
  white-space: nowrap;
`;

const StatusItem = styled.span`
  width: ${p => (p.$width ? `${p.$width}px` : 'auto')};
  ${p => p.$grow && 'flex: 1;'}
`;

const StatusIcons = styled.div`
  align-items: center;
  display: flex;
  gap: 14px;
  padding-right: 56px;
  ${Arrow} {
    height: 3px;
  }
`;

const Units = styled.span`
  margin: 0 4px 0 20px;
`;

const quickTools = [
  ['file', 'New'],
  ['open', 'Open'],
  ['save', 'Save'],
  ['print', 'Print'],
  ['undo', 'Undo'],
];

const sketchTools = [
  ['line', true],
  ['circle', true],
  ['spline', true],
  ['planeGrid', false],
  ['rect', true],
  ['arc', true],
  ['ellipse', true],
  ['text', false],
  ['slot', true],
  ['polygon', false],
  ['fillet', true],
  ['point', false],
];

const commandTabs = [
  ['Features', 61],
  ['Sketch', 55],
  ['Evaluate', 61],
  ['DimXpert', 66],
  ['SOLIDWORKS Add-Ins', 133],
  ['SOLIDWORKS MBD', 115],
];

const tree = [
  ['history', 'History', true],
  ['sensors', 'Sensors'],
  ['annotations', 'Annotations', true],
  ['equations', 'Equations'],
  ['material', 'Material <not specified>'],
  ['plane', 'Front Plane'],
  ['plane', 'Top Plane'],
  ['plane', 'Right Plane'],
  ['origin', 'Origin'],
  ['sketch', 'Sketch1'],
];

const viewTools = [
  ['zoomFit'],
  ['zoomArea'],
  ['prevView'],
  ['section'],
  ['orientText'],
  ['orientation', true],
  ['style', true],
  ['glasses', true],
  ['ball'],
  ['scene', true],
  ['screen', true],
];

const barTools = [
  'abc', 'tape', 'scales', 'massPlane', 'gauge', 'lightClock', 'checks', 'checks',
  'sigma', 'deviation', 'draft', 'thickness', 'compare', 'checkEntity', 'excel',
];

const simTools = ['simulation', 'floXpress', 'dfm', 'squares', 'ring'];

/* sketch geometry, 6.68px per mm */
const Slot = ({ x, top, bottom, color }) => (
  <g stroke={color} fill={color} strokeWidth="2.200">
    <path d={`M${x - 1.8} ${top}V${bottom}M${x + 1.8} ${top}V${bottom}`} />
    {[top, bottom].map(y => (
      <g key={y} stroke="none">
        <circle cx={x - 1.8} cy={y} r="2.600" />
        <circle cx={x + 1.8} cy={y} r="2.600" />
      </g>
    ))}
  </g>
);

const heads = {
  up: 'l-2.500 10h5z',
  down: 'l-2.500-10h5z',
  left: 'l10-2.500v5z',
  right: 'l-10-2.500v5z',
};

const Head = ({ x, y, dir }) => <path d={`M${x} ${y}${heads[dir]}`} />;

const SketchDrawing = () => {
  const outer = Array.from({ length: 14 }, (_, i) => 671.5 + i * 20.04);
  const inner = Array.from({ length: 13 }, (_, i) => 681.5 + i * 20.04);
  return (
    <Drawing viewBox="189 106 1133 588">
      <path d="M633 196.500h334v334H633z" fill="none" stroke="#000" strokeWidth="1.800" />
      <path d="M633 363.500h21" stroke="#000" strokeWidth="1.800" />
      {inner.map((x, i) => (
        <Slot key={x} x={x} top={229.5} bottom={496.5} color={i === 5 ? '#4da6ff' : '#0000f5'} />
      ))}
      {outer.map((x, i) => (
        <g key={x}>
          <Slot x={x} top={196.5} bottom={329.5} color={i === 6 ? '#000' : '#0000f5'} />
          <Slot x={x} top={396.5} bottom={530.5} color={i === 6 ? '#000' : '#0000f5'} />
        </g>
      ))}
      <circle cx="654" cy="363.500" r="2.600" fill="#0000f5" />
      {[[633, 196.5], [967, 196.5], [967, 530.5], [633, 530.5], [633, 363.5], [800, 530.5]].map(([x, y]) => (
        <circle key={`${x}-${y}`} cx={x} cy={y} r="2.600" />
      ))}
      <g stroke="#000" fill="none">
        <path d="M799.500 498v32" strokeDasharray="10 3 3 3" />
        <path d="M556 196.500h77M556 530.500h77M564.500 197v156M564.500 374v156" />
        <path d="M616 329.500h170M624.500 179v17M624.500 330v17" />
        <path d="M632.500 533v103M966.500 533v103M633 628.500h137M796 628.500h171" />
        <path d="M793.500 163v34M799.500 163v32M776 171.500h17M800 171.500h17" />
        <path d="M777.500 179v17M777.500 232v15M766 211.500h17M790 211.500h17M783.500 204v22M762 222.500h39" />
        <path d="M750 229.500h27M750 496.500h27M759.500 230v181M759.500 427v69" />
        <path d="M772 344.500h39M789.500 333v20M793.500 333v20" />
      </g>
      <Head x={564.5} y={197} dir="up" />
      <Head x={564.5} y={530} dir="down" />
      <Head x={624.5} y={196} dir="down" />
      <Head x={624.5} y={330} dir="up" />
      <Head x={633} y={628.5} dir="left" />
      <Head x={967} y={628.5} dir="right" />
      <Head x={793} y={171.5} dir="right" />
      <Head x={800} y={171.5} dir="left" />
      <Head x={777.5} y={196} dir="down" />
      <Head x={777.5} y={232} dir="up" />
      <Head x={783} y={211.5} dir="right" />
      <Head x={790} y={211.5} dir="left" />
      <Head x={782} y={222.5} dir="right" />
      <Head x={759.5} y={230} dir="up" />
      <Head x={759.5} y={496} dir="down" />
      <Head x={789} y={344.5} dir="right" />
      <Head x={793} y={344.5} dir="left" />
      <g fill="#4da6ff" stroke="#000">
        <path d="M776.500 226.500h10v6h-10zM782.500 226.500v6" />
        <path d="M776.500 493.500h10v6h-10zM782.500 493.500v6" />
      </g>
      <text x="565" y="370">50</text>
      <text x="624" y="286">20</text>
      <text x="783" y="634">50</text>
      <text x="796" y="177">1</text>
      <text x="782" y="203">7</text>
      <text x="803" y="203">8</text>
      <text x="786" y="217">1</text>
      <text x="781" y="228">0.50</text>
      <text x="773" y="236">6</text>
      <text x="792" y="351">0.50</text>
      <text x="759" y="424">40</text>
      <g stroke="red" strokeWidth="2">
        <path d="M632.500 530v-22M633 530.500h8" />
        <path d="M632.500 497l-3 11h6z" fill="red" stroke="none" />
        <path d="M649 530.500l-9-3v6z" fill="red" stroke="none" />
      </g>
    </Drawing>
  );
};

const App = () => (
  <Window>
    <GlobalStyle />
    <TitleBar>
      <Logo>
        <svg width="22" height="22" viewBox="0 0 22 22" fill="none" stroke="#fff" strokeWidth="1.600">
          <path d="M8 1.500c5-1.500 8-.5 5.500 2L9 7.500" />
          <path d="M4 9.500c6-2.500 9-.5 7 3.500-1.500 3.500-5 6.500-10.500 7l3.500-8" />
          <path d="M21.500 9c-5-.5-7.500 1.500-5 4.500 2.500 3.500-1 6.500-5.500 5" />
        </svg>
        <LogoText>
          <b>SOLID</b>WORKS
        </LogoText>
      </Logo>
      <LogoArrow aria-label="Menu" />
      <QuickBar>
        {quickTools.map(([name, label]) => (
          <QuickSplit key={name}>
            <Tool name={name} label={label} />
            <Arrow aria-label={`${label} options`} />
          </QuickSplit>
        ))}
        <SelectSplit>
          <Pressed aria-label="Select">
            <Icon name="cursor" />
          </Pressed>
          <Arrow aria-label="Select options" />
        </SelectSplit>
        <QuickTail>
          <Tool name="lights" label="Rebuild" />
          <Tool name="hand" label="File properties" />
          <Tool name="list" label="Options" />
          <Split>
            <Arrow aria-label="More options" />
          </Split>
        </QuickTail>
      </QuickBar>
      <DocTitle>Sketch1 of Part2 *</DocTitle>
      <TitleEnd>
        <SearchBox>
          <Icon name="helpBubble" />
          <input aria-label="Search SOLIDWORKS Help" placeholder="Search SOLIDWORKS Help" />
          <Tool name="search" label="Search" />
          <Arrow aria-label="Search options" />
        </SearchBox>
        <Split $gap={7}>
          <Tool name="question" label="Help" />
          <Arrow aria-label="Help options" />
        </Split>
        <Tool name="minimize" label="Minimize" />
        <Tool name="restore" label="Restore" />
        <Tool name="cross" label="Close" />
      </TitleEnd>
    </TitleBar>

    <Ribbon>
      <BigCommand icon="exitSketch" text={'Exit\nSketch'} width={44} active menu />
      <BigCommand icon="smartDim" text={'Smart\nDimension'} width={64} menu />
      <Divider $left={2} $right={4} />
      <SketchGrid>
        {sketchTools.map(([name, menu]) => (
          <Split key={name} $gap={6}>
            <Tool name={name} />
            {menu && <Arrow aria-label={`${name} options`} />}
          </Split>
        ))}
      </SketchGrid>
      <Divider $left={4} $right={1} />
      <BigCommand icon="trim" text={'Trim\nEntities'} width={50} menu />
      <BigCommand icon="convert" text={'Convert\nEntities'} width={48} menu />
      <BigCommand icon="offset" text={'Offset\nEntities'} width={49} low />
      <EntityList>
        <EntityRow>
          <EntityButton>
            <Icon name="mirror" />
            Mirror Entities
          </EntityButton>
        </EntityRow>
        <EntityRow>
          <EntityButton>
            <Icon name="pattern" />
            Linear Sketch Pattern
          </EntityButton>
          <Arrow aria-label="Pattern options" />
        </EntityRow>
        <EntityRow>
          <EntityButton>
            <Icon name="move" />
            Move Entities
          </EntityButton>
          <Arrow aria-label="Move options" />
        </EntityRow>
      </EntityList>
      <Divider $left={4} $right={4} />
      <BigCommand icon="relations" text={'Display/Delete\nRelations'} width={80} menu />
      <BigCommand icon="repair" text={'Repair\nSketch'} width={47} low />
      <Divider $left={0} $right={0} />
      <BigCommand icon="snaps" text={'Quick\nSnaps'} width={42} disabled menu />
      <Divider $left={0} $right={4} />
      <BigCommand icon="rapid" text={'Rapid\nSketch'} width={40} low />
    </Ribbon>

    <Body>
      <Center>
        <Work>
          <Side>
            <CommandTabs>
              {commandTabs.map(([text, width]) => (
                <CommandTab key={text} $width={width} $active={text === 'Sketch'}>
                  {text}
                </CommandTab>
              ))}
            </CommandTabs>
            <PanelTabs>
              {['part', 'property', 'config', 'target', 'sphere'].map((name, i) => (
                <PanelTab key={name} aria-label={name} $active={i === 0}>
                  <Icon name={name} />
                </PanelTab>
              ))}
              <MoreTabs aria-label="More tabs">»</MoreTabs>
            </PanelTabs>
            <FilterBox>
              <Icon name="funnel" />
              <input aria-label="Filter" />
            </FilterBox>
            <TreePane>
              <TreeRoot>
                <Icon name="root" />
                {'Part2  (Default<<Default>_Disp'}
              </TreeRoot>
              <ul>
                {tree.map(([icon, text, expandable]) => (
                  <TreeRow key={text}>
                    <Expander $shown={expandable} aria-label={`Expand ${text}`} />
                    <TreeLabel>
                      <Icon name={icon} />
                      {text}
                    </TreeLabel>
                  </TreeRow>
                ))}
              </ul>
            </TreePane>
            <Empty />
            <Scroll>
              <ScrollEnd aria-label="Scroll left">‹</ScrollEnd>
              <Thumb />
              <ScrollEnd aria-label="Scroll right">›</ScrollEnd>
            </Scroll>
            <Handle aria-label="Collapse panel">
              <i />
              <i />
              <i />
            </Handle>
          </Side>
          <Viewport>
            <SketchDrawing />
            <ViewTools>
              {viewTools.map(([name, menu]) => (
                <React.Fragment key={name}>
                  <Tool name={name} />
                  {menu && <Arrow $dim aria-label={`${name} options`} />}
                </React.Fragment>
              ))}
            </ViewTools>
            <ViewWindow>
              <Tool name="paneLeft" />
              <Tool name="paneRight" />
              <Tool name="minimize" label="Minimize view" />
              <Tool name="restore" label="Restore view" />
              <Tool name="cross" label="Close view" />
            </ViewWindow>
            <Corner viewBox="0 0 66 60">
              <g opacity=".35">
                <path d="M18 4H3v16c0 5 3 7 8 7h7" fill="none" stroke="#6f7fe8" strokeWidth="2" />
                <path d="M5 18l4-6 12-5 3 4-12 6z" fill="#f0d040" stroke="#776" />
                <path d="M20 7l4-1.500 2 4-3 2z" fill="#e05060" />
                <path d="M27 16c9 3 9 14-1 17v5l-9-8 9-8v4c4-1 4-6 1-10z" fill="#b070e0" stroke="#7a4ab0" />
              </g>
              <path d="M44 38l4-1 7 8 7-8 3 2-7 9 7 9-3 2-7-8-7 8-4-1 8-10z" fill="#f2b8bd" stroke="#dcA4aa" />
            </Corner>
            <TaskTabs>
              {['home', 'library', 'folderOpen', 'palette', 'sphere', 'hand'].map((name, i) => (
                <TaskTab key={name} aria-label={name} $active={i === 0}>
                  <Icon name={name} />
                </TaskTab>
              ))}
            </TaskTabs>
            <Triad viewBox="0 0 52 52">
              <path d="M9.500 16h3v25h-3z" fill="#6fb56f" stroke="#1d6b1d" />
              <path d="M11 10l4 9H7z" fill="#1d7a1d" />
              <path d="M11 40.500h22v3H11z" fill="#e06a6a" stroke="#a81414" />
              <path d="M41 42l-9-4v8z" fill="#c01414" />
              <circle cx="11" cy="42" r="4.500" fill="#1c1c9c" />
              <path d="M7.500 1.500l3 4 3-4M10.500 5.500v4" fill="none" stroke="#178a17" />
              <path d="M41.500 38.500l5 8M46.500 38.500l-5 8" stroke="#f01414" />
            </Triad>
            <ViewName>*Front</ViewName>
          </Viewport>
        </Work>
        <SheetTabs>
          {['M4 2v8M11 2L6 6l5 4z', 'M9 2L4 6l5 4z', 'M4 2l5 4-5 4z', 'M9 2v8M2 2l5 4-5 4z'].map(d => (
            <SheetNav key={d} aria-label="Scroll tabs">
              <svg width="12" height="12" viewBox="0 0 12 12" fill="#8f9195" stroke="#8f9195">
                <path d={d} />
              </svg>
            </SheetNav>
          ))}
          <SheetTab $width={57} $active>Model</SheetTab>
          <SheetTab $width={67}>3D Views</SheetTab>
          <SheetTab $width={105}>Motion Study 1</SheetTab>
        </SheetTabs>
      </Center>
      <RightBar>
        <Grip />
        {barTools.map((name, i) => (
          <Split key={i} $gap={8}>
            <Tool name={name} />
            {name === 'checkEntity' && <Arrow $dim aria-label="Check options" />}
          </Split>
        ))}
        <BarRule />
        {simTools.map(name => (
          <Tool key={name} name={name} />
        ))}
        <BarEnd />
      </RightBar>
    </Body>

    <StatusBar>
      <StatusItem $grow>SOLIDWORKS Premium 2015 x64 Edition</StatusItem>
      <StatusItem $width={145}>Total Length: 43.53mm</StatusItem>
      <StatusItem $width={94}>Under Defined</StatusItem>
      <StatusItem $width={180}>Editing Sketch1 (Locked Focus)</StatusItem>
      <StatusIcons>
        <Icon name="lights" />
        <Units>MMGS</Units>
        <Arrow $up aria-label="Units" />
        <Tool name="helpBox" label="Quick tips" />
      </StatusIcons>
      <Tool name="tag" label="Tags" />
    </StatusBar>
  </Window>
);

export default App;
